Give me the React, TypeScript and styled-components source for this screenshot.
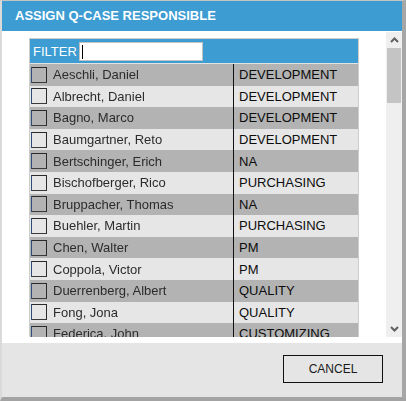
import styled, { createGlobalStyle } from 'styled-components'
import { FC } from 'react'

const GlobalStyle = createGlobalStyle`
  html, body {
    margin: 0;
    padding: 0;
    background: #ffffff;
  }
  * {
    box-sizing: border-box;
  }
`

type Person = { name: string; department: string }

const people: Person[] = [
  { name: 'Aeschli, Daniel', department: 'DEVELOPMENT' },
  { name: 'Albrecht, Daniel', department: 'DEVELOPMENT' },
  { name: 'Bagno, Marco', department: 'DEVELOPMENT' },
  { name: 'Baumgartner, Reto', department: 'DEVELOPMENT' },
  { name: 'Bertschinger, Erich', department: 'NA' },
  { name: 'Bischofberger, Rico', department: 'PURCHASING' },
  { name: 'Bruppacher, Thomas', department: 'NA' },
  { name: 'Buehler, Martin', department: 'PURCHASING' },
  { name: 'Chen, Walter', department: 'PM' },
  { name: 'Coppola, Victor', department: 'PM' },
  { name: 'Duerrenberg, Albert', department: 'QUALITY' },
  { name: 'Fong, Jona', department: 'QUALITY' },
  { name: 'Federica, John', department: 'CUSTOMIZING' },
]

const Dialog = styled.div`
  width: 406px;
  height: 401px;
  display: flex;
  flex-direction: column;
  border-top: 1px solid #c4c4c4;
  border-left: 2px solid #dadada;
  border-right: 4px solid #a6a6a6;
  border-bottom: 4px solid #a3a3a3;
  font-family: 'Liberation Sans', Arial, sans-serif;
  background: #ffffff;
`

const TitleBar = styled.div`
  height: 30px;
  flex: none;
  display: flex;
  align-items: center;
  padding-left: 13px;
  padding-bottom: 1px;
  background: #3d9cd2;
  color: #ffffff;
  font-size: 13px;
  font-weight: 700;
`

const Body = styled.div`
  flex: none;
  display: flex;
  padding: 1px 0 6px 27px;
  background: #ffffff;
`

const ScrollArea = styled.div`
  flex: 1;
  height: 305px;
  overflow: hidden;
  padding-top: 6px;
`

const Table = styled.div`
  width: 330px;
  border: 1px solid #cdcdcd;
  border-bottom: none;
`

const FilterRow = styled.div`
  height: 25px;
  display: flex;
  align-items: center;
  gap: 2px;
  padding-left: 3px;
  background: #3d9cd2;
  border-bottom: 1px solid #e4e4e4;
  color: #ffffff;
  font-size: 13px;
`

const FilterBox = styled.div`
  width: 124px;
  height: 19px;
  margin-top: 1px;
  display: flex;
  align-items: center;
  padding-left: 2px;
  background: #ffffff;
  border: 1px solid #c2c2c2;
`

const Caret = styled.span`
  width: 1px;
  height: 14px;
  background: #000000;
`

const Row = styled.div<{ $dark: boolean }>`
  height: 21.6px;
  display: grid;
  grid-template-columns: 203px 1px 1fr;
  align-items: center;
  background: ${({ $dark }) => ($dark ? '#b3b3b3' : '#e6e6e6')};
  font-size: 13px;
`

const NameCell = styled.div`
  display: flex;
  align-items: center;
  gap: 6px;
  padding-left: 1px;
`

const Checkbox = styled.span`
  width: 16px;
  height: 16px;
  flex: none;
  border: 1px solid #2a2a2a;
  border-left-color: #2f4f7a;
  border-bottom-color: #3a3a3a;
`

const Name = styled.span`
  color: #2c2c2c;
  filter: blur(0.45px);
  white-space: nowrap;
`

const Divider = styled.span`
  align-self: stretch;
  background: #111111;
`

const Department = styled.span`
  padding-left: 5px;
  color: #0d0d0d;
  white-space: nowrap;
`

const Scrollbar = styled.div`
  width: 16px;
  height: 305px;
  flex: none;
  display: flex;
  flex-direction: column;
  align-items: stretch;
  background: #efefef;
`

const ScrollButton = styled.div`
  height: 16px;
  display: flex;
  align-items: center;
  justify-content: center;
`

const Thumb = styled.div`
  height: 55px;
  margin: 0 1px;
  background: #c4c4c4;
`

const Spacer = styled.div`
  flex: 1;
`

const Footer = styled.div`
  flex: 1;
  display: flex;
  justify-content: flex-end;
  align-items: flex-start;
  padding: 12px 19px 0 0;
  background: #e5e5e5;
`

const Button = styled.button`
  width: 100px;
  height: 28px;
  background: #e5e5e5;
  border: 1px solid #111111;
  color: #1a1a1a;
  font-family: 'Liberation Sans', Arial, sans-serif;
  font-size: 12px;
  padding: 0;
`

const Chevron: FC<{ up?: boolean }> = ({ up }) => (
  <svg width="9" height="6" viewBox="0 0 9 6">
    <path
      d={up ? 'M1 5 L4.5 1.5 L8 5' : 'M1 1 L4.5 4.5 L8 1'}
      fill="none"
      stroke="#606060"
      strokeWidth="2"
    />
  </svg>
)

export default function App() {
  return (
    <>
      <GlobalStyle />
      <Dialog>
        <TitleBar>ASSIGN Q-CASE RESPONSIBLE</TitleBar>
        <Body>
          <ScrollArea>
            <Table>
              <FilterRow>
                FILTER
                <FilterBox>
                  <Caret />
                </FilterBox>
              </FilterRow>
              {people.map((p, i) => (
                <Row key={p.name} $dark={i % 2 === 0}>
                  <NameCell>
                    <Checkbox />
                    <Name>{p.name}</Name>
                  </NameCell>
                  <Divider />
                  <Department>{p.department}</Department>
                </Row>
              ))}
            </Table>
          </ScrollArea>
          <Scrollbar>
            <ScrollButton>
              <Chevron up />
            </ScrollButton>
            <Thumb />
            <Spacer />
            <ScrollButton>
              <Chevron />
            </ScrollButton>
          </Scrollbar>
        </Body>
        <Footer>
          <Button>CANCEL</Button>
        </Footer>
      </Dialog>
    </>
  )
}
